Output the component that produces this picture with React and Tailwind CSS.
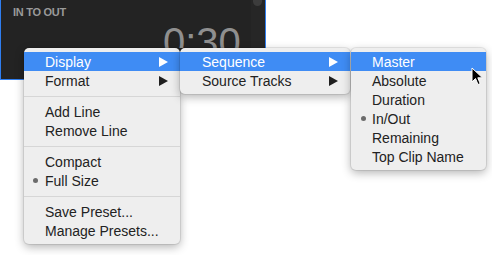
import React from "react";

const font = { fontFamily: '"Liberation Sans", Arial, sans-serif' };

const Arrow = ({ active }) => (
  <svg width="9" height="10" viewBox="0 0 9 10" className="ml-auto">
    <polygon points="0,0 9,5 0,10" fill={active ? "#ffffff" : "#1f1f1f"} />
  </svg>
);

const Item = ({ label, active, arrow, dot, pad = "pl-[21px]", dotPos = "left-[9px]" }) => (
  <div
    className={`relative flex h-[19px] items-center ${pad} pr-[12px] text-[14px] leading-none ${
      active ? "bg-[#3f8cf4] text-white" : "text-[#222]"
    }`}
  >
    {dot && (
      <span className={`absolute ${dotPos} top-[7px] h-[5px] w-[5px] rounded-full bg-[#6b6b6b]`} />
    )}
    <span>{label}</span>
    {arrow && <Arrow active={active} />}
  </div>
);

const Sep = () => (
  <div className="flex h-[12px] items-center">
    <div className="h-px w-full bg-[#d6d6d6]" />
  </div>
);

const Menu = ({ className, children }) => (
  <div
    className={`absolute rounded-[5px] bg-[#eeeeee] py-[4px] shadow-[0_3px_10px_rgba(0,0,0,0.3),0_0_0_1px_rgba(0,0,0,0.08)] ${className}`}
  >
    {children}
  </div>
);

export default function App() {
  return (
    <div className="relative h-[255px] w-[492px] overflow-hidden bg-white" style={font}>
      {/* panel behind */}
      <div className="relative h-[80px] w-[266px] overflow-hidden border-x border-b border-[#2f7ef0] bg-[#232323]">
        <div className="absolute right-0 top-0 h-full w-[14px] bg-[#262626]" />
        <div className="absolute right-[3px] top-[-4px] h-[10px] w-[9px] rounded-full bg-[#3c3c3c]" />
        <div className="pl-[12px] pt-[4px] text-[11px] font-semibold tracking-tight text-[#9a9a9a]">
          IN TO OUT
        </div>
        <div className="absolute left-[162px] top-[22px] h-[26px] overflow-hidden text-[40px] font-light leading-none text-[#8f8f8f]">
          0:30
        </div>
      </div>

      {/* main menu */}
      <Menu className="left-[24px] top-[48px] w-[156px]">
        <Item label="Display" active arrow />
        <Item label="Format" arrow />
        <Sep />
        <Item label="Add Line" />
        <Item label="Remove Line" />
        <Sep />
        <Item label="Compact" />
        <Item label="Full Size" dot />
        <Sep />
        <Item label="Save Preset..." />
        <Item label="Manage Presets..." />
      </Menu>

      {/* display submenu */}
      <Menu className="left-[180px] top-[48px] w-[170px]">
        <Item label="Sequence" active arrow pad="pl-[22px]" />
        <Item label="Source Tracks" arrow pad="pl-[22px]" />
      </Menu>

      {/* sequence submenu */}
      <Menu className="left-[351px] top-[48px] w-[135px]">
        <Item label="Master" active />
        <Item label="Absolute" />
        <Item label="Duration" />
        <Item label="In/Out" dot dotPos="left-[10px]" />
        <Item label="Remaining" />
        <Item label="Top Clip Name" />
      </Menu>

      {/* cursor */}
      <svg
        className="absolute left-[471px] top-[67px]"
        width="13"
        height="20"
        viewBox="0 0 13 20"
      >
        <path
          d="M1 1 L1 15 L4.5 11.5 L7 17.5 L9.2 16.6 L6.8 10.8 L11.5 10.8 Z"
          fill="#000"
          stroke="#fff"
          strokeWidth="1"
          strokeLinejoin="round"
        />
      </svg>
    </div>
  );
}
